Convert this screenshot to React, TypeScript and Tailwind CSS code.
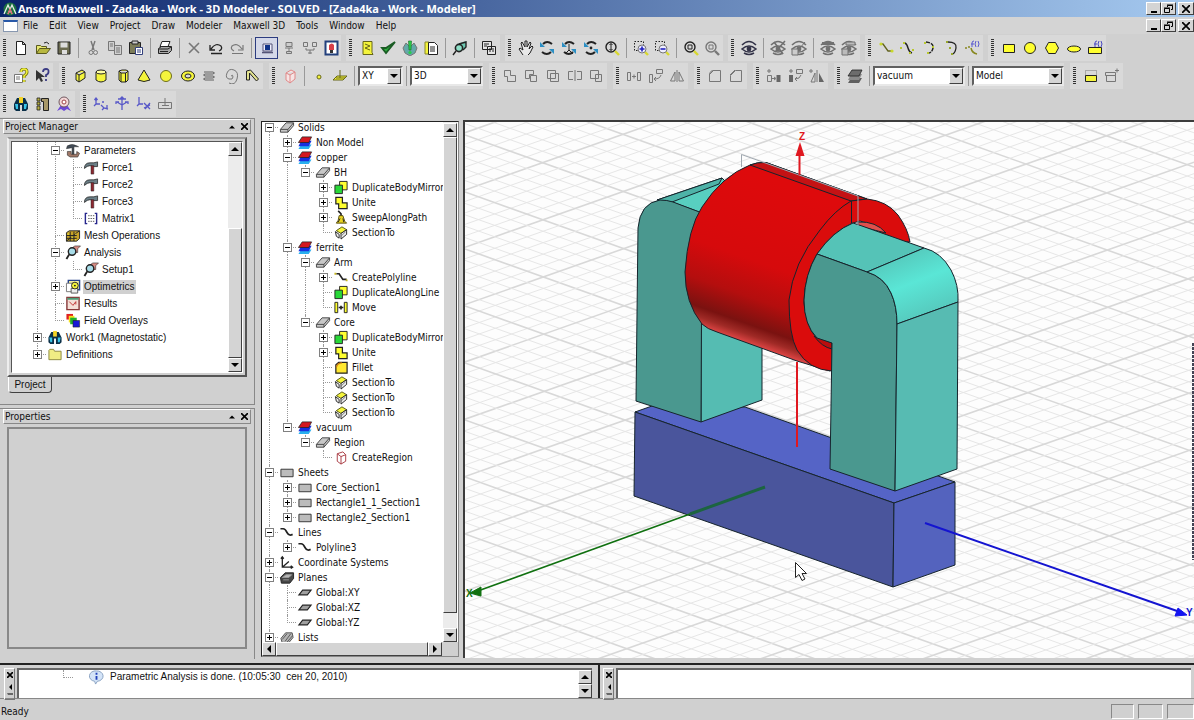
import { Fragment } from "react";
import type { ReactNode } from "react";

const Y = "#f4f43c";
const K = "#222";
const G = "#777";

const raised = "border border-t-white border-l-white border-r-[#404040] border-b-[#404040] bg-[#d4d4d4]";

const eye = (c: string, extra?: ReactNode) => (
  <>
    <path d="M1 5Q8-2 15 5M3 13Q8 16 13 13" stroke={c} strokeWidth="1.6" fill="none" />
    <path d="M1 9Q8 3 15 9Q8 15 1 9Z" stroke={c} strokeWidth="1.6" fill="none" />
    <circle cx="8" cy="9" r="2.4" fill={c} />
    {extra}
  </>
);

const rotate = (extra?: ReactNode) => (
  <>
    <path d="M4 4Q8 0 13 4M3 12Q8 16 12 12" stroke={K} strokeWidth="2" fill="none" />
    <path d="M1 2v5h5zM15 14V9h-5z" fill="#2b8fc4" />
    {extra}
  </>
);

const lens = (c: string, handle: string, extra?: ReactNode) => (
  <>
    <circle cx="7" cy="7" r="5" stroke={c} strokeWidth="1.4" fill="none" />
    <path d="M11 11l4 4" stroke={handle} strokeWidth="2.4" />
    {extra}
  </>
);

const motor = (
  <>
    <path d="M1 8L4 2h8l3 6v5l-2 2H9V9H7v6H3l-2-2z" fill="#0b2f48" />
    <path d="M2 8h3v5H3zM11 8h3l-1 5h-2z" fill="#39c4e8" />
    <path d="M6 1h4v6H6z" fill="#f6d428" />
  </>
);

const layers = (a: string, b: string, c: string) => (
  <>
    <path d="M4 10h11l-3 5H1z" fill={c} />
    <path d="M4 6h11l-3 6H1z" fill={b} />
    <path d="M5 2h10l-3 6H1z" fill={a} stroke={K} strokeWidth=".8" />
  </>
);

const bar = (fill: string, stroke: string) => (
  <>
    <path d="M1 10L7 3h8v3l-6 7H1z" fill={fill} stroke={stroke} />
    <path d="M1 10h8l6-7M9 10v3" fill="none" stroke={stroke} />
  </>
);

const analysis = (
  <>
    <path d="M7 3l3-2h6l-3 3v4H8z" fill="#d88c84" stroke={K} strokeWidth=".6" />
    <circle cx="7" cy="7" r="4" fill="#a8dce8" stroke={K} strokeWidth="1.5" />
    <path d="M4 10l-3 5" stroke={K} strokeWidth="2" />
  </>
);

const icons: Record<string, ReactNode> = {
  new: <path d="M3.500 1.500h6l3 3v10h-9zM9.500 1.500v3h3" fill="#fff" stroke={K} />,
  open: (
    <>
      <path d="M1.500 13.500v-8h4l1 1h5v2" fill="#e8e870" stroke="#5a5a20" />
      <path d="M1.500 13.500l3-5h11l-4 5z" fill="#b8b840" stroke="#5a5a20" />
      <path d="M9 3q3-2 5 1" fill="none" stroke={K} />
    </>
  ),
  save: (
    <>
      <path d="M2 2h12v12H2z" fill="#6b6b50" stroke={K} />
      <path d="M4.500 2.500h7v5h-7zM6 10h5v4H6z" fill="#ddd" />
    </>
  ),
  cut: (
    <>
      <path d="M6 1l3 9M10 1L7 10" stroke={G} strokeWidth="1.400" />
      <circle cx="6" cy="12.500" r="2" fill="none" stroke={G} />
      <circle cx="10.500" cy="12.500" r="2" fill="none" stroke={G} />
    </>
  ),
  copy: <path d="M1.500 1.500h6v9h-6zM7.500 5.500h7v9h-7zM3 4h3M3 6h3M9 8h4M9 10h4M9 12h4" fill="#d0d0d0" stroke={G} />,
  paste: (
    <>
      <path d="M1.500 2.500h11v11h-11z" fill="#7c7c58" stroke={K} />
      <path d="M4 1h6v3H4z" fill="#ccc" stroke={K} />
      <path d="M7.500 7.500h7v7h-7zM9 10h4M9 12h4" fill="#fff" stroke="#33407c" />
    </>
  ),
  print: (
    <>
      <path d="M5 1.500h8l-2 5H3z" fill="#fff" stroke={K} />
      <path d="M1.500 8.500l3-2h10v4l-3 3h-10z" fill="#a8a8a8" stroke={K} />
      <path d="M3 11.500h8M2 9h9l3-2" stroke={K} />
    </>
  ),
  del: <path d="M3 3l10 10M13 3L3 13" stroke={G} strokeWidth="1.600" />,
  undo: <path d="M2 5v5h5M3 9Q8 2 13 6Q15 9 11 11M3 13.500h11" stroke={K} strokeWidth="1.300" fill="none" />,
  redo: <path d="M14 5v5H9M13 9Q8 2 3 6Q1 9 5 11M3 13.500h11" stroke={G} strokeWidth="1.200" fill="none" />,
  local: (
    <>
      <path d="M4 4h9v7H4z" fill="#eef" stroke="#557" />
      <path d="M6 5h5v5H6z" fill="#113388" />
      <path d="M3 12.500h11" stroke="#557" strokeWidth="1.600" />
    </>
  ),
  remote: <path d="M5 2.500h6v4H5zM4 8h8M8 8v3M5.500 11.500h5v2h-5z" fill="#ccc" stroke={G} />,
  queue: <path d="M1.500 2.500h4v4h-4zM10.500 2.500h4v4h-4zM4 8v2h8V8M8 10v4M6 13h4" fill="none" stroke={G} />,
  stop: (
    <>
      <path d="M2.500 1.500h12v13h-12z" fill="#fff" stroke="#23407c" strokeWidth="2" />
      <path d="M6 5q3-3 5 0v5H6z" fill="#d84048" />
      <path d="M7 10h3v3H7z" fill="#333" />
    </>
  ),
  note: (
    <>
      <path d="M4 1.500h9v11l1 2H4z" fill={Y} stroke="#66661a" />
      <path d="M6 4l5 2-5 2 5 2" stroke="#66661a" fill="none" />
    </>
  ),
  check: <path d="M2 8l4 5L15 2l-9 6z" fill="#2cae3c" stroke="#1a5c24" strokeWidth="1.800" />,
  analyze: (
    <>
      <path d="M4 3L1 8l2 5 5 3 5-3 2-5-3-5-4 4z" fill="#64a8a8" stroke={G} />
      <path d="M6.500 1h3l-.5 9H7z" fill="#28d048" stroke="#186828" strokeWidth=".6" />
      <circle cx="8" cy="12.500" r="1.600" fill="#28d048" />
    </>
  ),
  pages: (
    <>
      <path d="M2 2h4v12H2z" fill={Y} stroke="#88882a" />
      <path d="M5.500 2.500h6l3 3v9h-9zM7 7h5M7 9h5M7 11h5" fill="#fff" stroke={K} />
    </>
  ),
  solve: (
    <>
      <path d="M5 4l9-3v7l-6 4z" fill="#6cc8b0" />
      <circle cx="7" cy="8" r="3.600" fill="#8fe0c8" stroke={K} strokeWidth="1.600" />
      <path d="M4 11l-3 4M7 4l7-2v5l-3 3" stroke={K} strokeWidth="1.400" fill="none" />
    </>
  ),
  windows: <path d="M1.500 1.500h9v8h-9zM6.500 6.500h8v8h-8zM3 4h5M3 6h3M8 9h5M8 11h2M11 11h2" fill="#e4e4e4" stroke={K} />,
  hand: <path d="M5 15L1 9l1-1 3 2L3 3l1-1 3 5V1h2v6l3-5 1 1-2 6 3-3 1 1-3 6-2 2" fill="#e8e8e8" stroke={K} />,
  rot1: rotate(),
  rot2: rotate(<path d="M8 4v6M8 10l-4 4M8 10l4 4" stroke={K} />),
  rot3: rotate(<circle cx="8" cy="8" r="1.400" fill={K} />),
  zoomv: lens(K, "#d8d830", <path d="M7 3.500v7M5.500 5L7 3.500 8.500 5M5.500 9L7 10.500 8.500 9" stroke={K} fill="none" />),
  zoomin: (
    <>
      <path d="M1.500 1.500h9v9h-9z" fill="none" stroke={K} strokeDasharray="1.500 1.500" />
      <path d="M12 12l3 3" stroke="#d8d830" strokeWidth="2.400" />
      <circle cx="9" cy="9" r="4" fill="#eef" stroke={G} />
      <path d="M9 6.500v5M6.500 9h5" stroke="#2020c0" strokeWidth="1.600" />
    </>
  ),
  zoomout: (
    <>
      <path d="M1.500 1.500h9v9h-9z" fill="none" stroke={K} strokeDasharray="1.500 1.500" />
      <path d="M12 12l3 3" stroke="#d8d830" strokeWidth="2.400" />
      <circle cx="9" cy="9" r="4" fill="#eef" stroke={G} />
      <path d="M6.500 9h5" stroke="#2020c0" strokeWidth="1.600" />
    </>
  ),
  fit: lens(K, "#d8d830", <path d="M5 5h4v4H5z" fill="none" stroke={K} />),
  fitsel: lens(G, G, <path d="M5 5h4v4H5z" fill="none" stroke={G} />),
  eye: eye("#333348"),
  eyex: eye("#707070", <path d="M4 2l9 12M15 1L5 12" stroke="#707070" strokeWidth="1.600" />),
  eyebox: eye("#707070", <path d="M1 9h6v6H1zM9 8l5-6" fill="#ccc" stroke="#707070" />),
  eyeall: eye("#707070", <path d="M2 2h12v3H2z" fill="#707070" />),
  eyebox2: eye("#707070", <path d="M1 9h6v6H1zM5 2h9v3H5z" fill="#bbb" stroke="#707070" />),
  line: (
    <>
      <path d="M3 4h2l5 7h4" fill="none" stroke="#62621e" strokeWidth="1.300" />
      <circle cx="3" cy="4" r="1.600" fill="#c8d82c" />
      <circle cx="14" cy="11" r="1.600" fill="#c8d82c" />
    </>
  ),
  spline: (
    <>
      <path d="M6 3q2 1 3 5t4 5" fill="none" stroke={K} strokeWidth="1.400" />
      <path d="M1 7h2v2H1zM4 2h2v2H4zM10 12h2v2h-2zM13 9h2v2h-2z" fill="#b8c82c" />
    </>
  ),
  arc3: (
    <>
      <path d="M5 2q8 1 7 6t-5 5" fill="none" stroke={K} strokeWidth="1.400" strokeDasharray="4 1" />
      <path d="M3 2h2v2H3zM11 6h2v2h-2zM6 12h2v2H6z" fill="#b8c82c" />
    </>
  ),
  arcc: (
    <>
      <path d="M5 2q9 0 8 6t-4 6" fill="none" stroke={K} strokeWidth="1.300" />
      <path d="M3 1h2v2H3zM6 7h2v2H6zM8 13h2v2H8z" fill="#98a82c" />
    </>
  ),
  eqc: (
    <>
      <path d="M1 8h2M4 7h2M7 8q1 5 6 6" stroke="#888820" fill="none" strokeWidth="1.500" />
      <path d="M8 7V3q0-2 2-2M7 4h3M12 1q-2 3 0 6M14 1q2 3 0 6" stroke="#5858d0" fill="none" />
    </>
  ),
  rect: <path d="M2.500 4.500h11v8h-11z" fill="#ffff30" stroke={K} />,
  circle: <circle cx="8" cy="8" r="5.500" fill="#ffff30" stroke={K} />,
  hexagon: <path d="M4.500 2.500h7l3 5.500-3 5.500h-7L1.500 8z" fill="#ffff30" stroke={K} />,
  ellipse: <ellipse cx="8" cy="9" rx="6.500" ry="3" fill="#ffff30" stroke={K} />,
  eqs: (
    <>
      <path d="M1.500 7.500h13v6h-13z" fill="#ffff30" stroke={K} />
      <path d="M8 7V3q0-2 2-2M7 4h3M12 1q-2 3 0 6M14 1q2 3 0 6" stroke="#4848c0" fill="none" />
    </>
  ),
  help: (
    <>
      <path d="M1.500 6.500h8v8h-8z" fill="#fff" stroke={G} />
      <path d="M3 9h4M3 11h4" stroke={G} />
      <path d="M8 4q0-3 3-3t3 3q0 2-3 4v2M11 12v2" fill="none" stroke="#77770e" strokeWidth="3" />
      <path d="M8 4q0-3 3-3t3 3q0 2-3 4v2M11 12v2" fill="none" stroke={Y} strokeWidth="1.500" />
    </>
  ),
  whats: (
    <>
      <path d="M2 2v11l3-3 2 4 2-1-2-4h4z" fill="#333" />
      <path d="M9 4q0-3 3-3t2.500 3q0 2-2.500 3v2M12 11v2" fill="none" stroke="#3c3c84" strokeWidth="1.800" />
    </>
  ),
  box: <path d="M4 5l6-3 3 2v6l-6 4-3-2zM4 5l3 2 6-3M7 7v7" fill={Y} stroke={K} />,
  cylinder: (
    <>
      <path d="M3 4v8q5 4 10 0V4" fill={Y} stroke={K} />
      <ellipse cx="8" cy="4" rx="5" ry="2" fill="#ffffa0" stroke={K} />
    </>
  ),
  prism: <path d="M4 3l3-1h4l2 1v9l-2 2H6l-2-2zM4 3l2 2h5l2-2M6 5v9M10.500 5v9" fill={Y} stroke={K} />,
  cone: <path d="M8 2l6 10q-6 3-12 0z" fill={Y} stroke={K} />,
  sphere: <circle cx="8" cy="8" r="5.500" fill={Y} stroke="#6c6c20" />,
  torus: (
    <>
      <ellipse cx="8" cy="8" rx="6.500" ry="5" fill={Y} stroke={K} />
      <ellipse cx="8" cy="8" rx="3" ry="2" fill="#d9d9d9" stroke={K} />
    </>
  ),
  helix: <path d="M3 4h9q3 1 0 2H4q-3 1 0 2h8q3 1 0 2H4q-3 1 0 2h9" fill="none" stroke="#606060" />,
  spiral: <path d="M8 8q2-2 2 1t-4 2-2-6 7-3 3 9-8 4" fill="none" stroke={G} />,
  bond: <path d="M2.500 12V3l4-1 8 9-2 2-7-8v7z" fill="#e4e490" stroke={K} />,
  region: <path d="M4 5l5-3 4 2v7l-5 4-4-3zM4 5l4 2 5-3M8 7v8" fill="#f6e4e4" stroke="#e08888" />,
  point: <circle cx="8" cy="9" r="2" fill={Y} stroke="#66661a" />,
  plane: <path d="M5 8h10l-4 4H1zM8 2v8M4 10h9" fill={Y} stroke="#66661a" />,
  unite: <path d="M2.500 2.500h6v5h5v6h-8v-5h-3z" fill="none" stroke={G} />,
  subtract: <path d="M2.500 2.500h8v4h-4v4h-4zM7.500 7.500h6v6h-6z" fill="none" stroke={G} />,
  intersect: <path d="M2.500 2.500h8v8h-8zM5.500 5.500h8v8h-8z" fill="none" stroke={G} />,
  split: <path d="M6 3.500H1.500v8H6M10 3.500h4.500v8H10M8 2v11" fill="none" stroke={G} />,
  imprint: <path d="M2.500 2.500h8v8h-8zM7.500 6.500h6v7h-6z" fill="none" stroke={G} />,
  move: <path d="M1.500 4.500h3v8h-3zM11.500 4.500h3v8h-3zM6 8.500h4M8 6.500v4" fill="none" stroke={G} />,
  rotobj: <path d="M1.500 6.500h3v8h-3zM8.500 1.500h6v4h-6zM6 11q6 0 7-4M8 9l-2 2 2 2" fill="none" stroke={G} />,
  mirror: <path d="M6 4v9H1.500zM10 4v9h4.500zM8 2v12" fill="none" stroke={G} />,
  fillet: <path d="M2.500 13.500v-8q1-3 4-3h7v11zM2 7l5-5" fill="none" stroke={G} />,
  chamfer: <path d="M2.500 13.500v-6l5-5h6v11zM2 7l5-5" fill="none" stroke={G} />,
  dupline: (
    <>
      <path d="M1 3h4M3 1v4M1.500 7.500h4v6h-4zM6 10.500h3M8 9l2 1.500L8 12" stroke={G} />
      <path d="M10.500 7h4v7h-4z" fill="#666" />
    </>
  ),
  duprot: (
    <>
      <path d="M1 3h4M3 1v4M8.500 1.500h6v4h-6zM7 11q5 0 6-4M9 9l-2 2 2 2" stroke={G} />
      <path d="M1 7h4v7H1z" fill="#666" />
    </>
  ),
  dupmirror: (
    <>
      <path d="M0 3h4M2 1v4M6 5v9H2zM8 2v12" stroke={G} />
      <path d="M10 5v9h5z" fill="#666" />
    </>
  ),
  layer: layers("#6c6c6c", "#8a8a8a", "#606060"),
  cover: (
    <>
      <path d="M2.500 2.500h11v5h-11z" fill="none" stroke="#777" strokeDasharray="1 1" />
      <path d="M2.500 7.500h11v6h-11z" fill={Y} stroke={K} />
    </>
  ),
  uncover: <path d="M1.500 4.500h10v3h-10zM2.500 7.500h9v6h-9zM11 2.500h4M13 .5v4" fill="none" stroke={G} />,
  motor,
  mat: (
    <>
      <path d="M2 2h3v3H2zM2 6h3v3H2zM2 10h3v4H2z" fill="#b8b040" stroke={K} strokeWidth=".8" />
      <path d="M6.500 2.500h7v12h-5v-9h-2z" fill="#a89868" stroke={K} />
    </>
  ),
  medal: (
    <>
      <path d="M1 15l4-6h6l4 6-4-2-3 2-3-2z" fill="#6c48d8" />
      <circle cx="8" cy="6" r="5" fill="#f4d8d8" stroke="#705860" />
      <circle cx="8" cy="6" r="2" fill="#fff" stroke="#a04048" />
    </>
  ),
  cs1: <path d="M3 2v6h4M3 8l-2 2M1.500 4L3 2l1.500 2M8 9l3 3 4 1M11 12l-2 2M14 9v4M9 6h2" fill="none" stroke="#5858c8" strokeWidth="1.300" />,
  cs2: <path d="M8 1v13M8 9l5-3M8 9L3 6M4 3h8M6 3l2-2 2 2M11 6h3v2M5 6H2v2" fill="none" stroke="#5858c8" strokeWidth="1.300" />,
  cs3: <path d="M3 1v7h4M3 8l-2 2M8 12l6-3M8 7l6 6M9 13l5-6" fill="none" stroke="#5858c8" strokeWidth="1.300" />,
  cs4: <path d="M1.500 6.500h13v6h-13zM8 2v8M5 9.500h7" fill="none" stroke={G} />,

  params: (
    <>
      <path d="M2 3q5-3 10 0l2 1H9v10H7V5L1 6z" fill="#434d58" stroke={K} strokeWidth=".5" />
      <path d="M2 9h4v3h6V9l3 2-2 4H5l-3-2z" fill="#a07868" stroke={K} strokeWidth=".6" />
    </>
  ),
  force: (
    <>
      <path d="M1 9q0-6 6-6h4l4-1v5h-5l-3-1q-3 0-6 3z" fill="#6c8088" stroke={K} strokeWidth=".8" />
      <path d="M8 6h3v9H8z" fill="#8c2830" stroke={K} strokeWidth=".5" />
    </>
  ),
  matrix: (
    <>
      <path d="M4 2.500H2v11h2M12 2.500h2v11h-2" fill="none" stroke="#26268c" strokeWidth="1.500" />
      <path d="M5 5h1.500M7.500 5H9M10 5h1.500M5 8h1.500M7.500 8H9M10 8h1.500M5 11h1.500M7.500 11H9M10 11h1.500" stroke="#555" />
    </>
  ),
  mesh: (
    <>
      <path d="M1 5l3-2h11v8l-3 3H1z" fill="#c8a428" stroke={K} />
      <path d="M1 8h11M1 11h11M5 4v10M9 4v10M1 14l11-9M12 5l3-2" stroke={K} />
      <path d="M2 6h2v1H2zM6 9h2v1H6zM10 6h1v1h-1zM10 12h1v1h-1z" fill={Y} />
    </>
  ),
  analysis,
  opti: (
    <>
      <path d="M3 1.500h12v10H3z" fill="#f4f0a0" stroke="#24408c" strokeWidth="1.500" />
      <path d="M1 4.500h7v9H1z" fill="#fff" stroke={G} />
      <path d="M6 10h7v5H6z" fill="#eee" stroke="#555" />
      <circle cx="10" cy="7" r="3.600" fill={Y} stroke={K} />
      <circle cx="10" cy="7" r="1" fill={K} />
    </>
  ),
  results: (
    <>
      <path d="M1.500 1.500h13v13h-13z" fill="#f4e0d8" stroke="#883838" strokeWidth="1.500" />
      <path d="M2 2h12v2H2z" fill="#4c9c78" />
      <path d="M4 6l4 4 3-4M11 6v3" stroke="#c03030" fill="none" />
    </>
  ),
  overlays: (
    <>
      <path d="M1 1h7v6H1z" fill="#e02020" />
      <path d="M3.500 3h6v7h-6z" fill="#f4e020" />
      <path d="M5 5h7v7H5z" fill="#20b030" />
      <path d="M8 8h7v7H8z" fill="#1818d8" stroke={K} strokeWidth=".6" />
    </>
  ),
  folder: <path d="M1.500 13.500v-10l1-1h4l1 2h7v9z" fill="#f0ec84" stroke="#8c8840" />,
  solid: bar("#c8c8c8", "#444"),
  mater: layers("#d41820", "#1830e0", "#28b0f0"),
  dup: (
    <>
      <path d="M6.500 1.500h8v9h-8z" fill="#ffff30" stroke={K} />
      <path d="M1.500 5.500h8v9h-8z" fill="#28d838" stroke={K} />
    </>
  ),
  unitey: <path d="M2.500 2.500h7v6h5v6h-9v-5h-3z" fill="#ffff30" stroke={K} strokeWidth="1.300" />,
  sweep: (
    <>
      <path d="M5 1l3 3v6" stroke={K} strokeWidth="1.800" fill="none" />
      <path d="M6 6h4l2 6 2 2H3l2-3z" fill="#e8d420" stroke="#554c10" />
      <path d="M7 9l-2 4M10 9l1 4" stroke={K} />
    </>
  ),
  section: (
    <>
      <path d="M3 6l6-4 5 3-6 4z" fill={Y} stroke="#555510" />
      <path d="M2 7l4 3v4l-3-2zM8 9l6-4v5l-6 5z" fill="#eee" stroke={K} />
      <path d="M8 12l5-5" stroke={G} />
    </>
  ),
  poly: (
    <>
      <path d="M3 4h3l4 6h4" stroke={K} strokeWidth="1.800" fill="none" />
      <path d="M1 3h2v2H1zM13 10h2v2h-2z" fill="#c8b820" />
    </>
  ),
  movey: (
    <>
      <path d="M1.500 2.500h3v11h-3zM11.500 2.500h3v11h-3z" fill="#ffff30" stroke={K} />
      <path d="M5.500 8h5M8 6v4" stroke={K} strokeWidth="1.800" />
    </>
  ),
  fillety: (
    <>
      <path d="M2.500 14v-9l3-2.500h9V14z" fill="#ffe830" stroke={K} strokeWidth="1.300" />
      <path d="M3 8q1-5 6-5" fill="none" stroke="#c87818" strokeWidth="1.300" />
    </>
  ),
  regiony: <path d="M4 4l6-2 3 3v7l-5 3-4-3zM4 4l4 3 5-2M8 7v8" fill="#fff" stroke="#a83840" />,
  sheet: <path d="M1.500 4.500h13v8h-13z" fill="#bcbcbc" stroke="#333" />,
  curve: <path d="M1 4h3q2 0 4 4t6 2" stroke={K} strokeWidth="1.800" fill="none" />,
  coord: <path d="M3 2v11h11M3 13l7-6M1.500 4L3 2l1.500 2M12 11.500l2 1.500-2 1.500" stroke={K} strokeWidth="1.400" fill="none" />,
  planes: (
    <>
      <path d="M1 8l5-5h9v6l-4 5H2z" fill="#484848" stroke={K} />
      <path d="M3 8l4-3h6l-3 3zM4 10.500h6" fill="#b8b8b8" stroke="#999" />
    </>
  ),
  planei: <path d="M5.500 5.500h9l-4 5h-9z" fill="#a0a0a0" stroke={K} strokeWidth="1.200" />,
  lists: <path d="M1.500 9l5-6h7l1 5-5 6H3zM3 10l5-6M6 12l6-8M8 13l6-7" fill="#b4b4b4" stroke="#555" />,
  info: (
    <>
      <path d="M8 1a6.500 5.500 0 0 1 1 11l-2 3-1-3A6.500 5.500 0 0 1 8 1z" fill="#d4e4f8" stroke="#88a0c0" />
      <path d="M8 3v2M8 6.500v4" stroke="#2040b8" strokeWidth="2" />
    </>
  ),
};

const Icon = ({ name, className = "h-4 w-4" }: { name: string; className?: string }) => (
  <svg viewBox="0 0 16 16" className={`shrink-0 ${className}`} fill="none">
    {icons[name]}
  </svg>
);

type ArrowDir = "up" | "down" | "left" | "right";

const arrows: Record<ArrowDir, string> = {
  up: "M0 6L4 2l4 4z",
  down: "M0 2l4 4 4-4z",
  left: "M6 0L2 4l4 4z",
  right: "M2 0l4 4-4 4z",
};

const Arrow = ({ dir, className = "h-2 w-2" }: { dir: ArrowDir; className?: string }) => (
  <svg viewBox="0 0 8 8" className={className}>
    <path d={arrows[dir]} fill="#000" />
  </svg>
);

const ScrollButton = ({ dir }: { dir: ArrowDir }) => (
  <button aria-label={`Scroll ${dir}`} className={`flex h-[14px] w-[14px] shrink-0 items-center justify-center ${raised}`}>
    <Arrow dir={dir} />
  </button>
);

/* ---------- toolbars ---------- */

const segWidths: Record<number, string> = {
  1: "w-[22px]",
  2: "w-[43px]",
  3: "w-[65px]",
  4: "w-[86px]",
  5: "w-[108px]",
  9: "w-[194px]",
};

type Combo = { label: string; options: string[]; width: string };
type Segment = string[] | Combo;

const row1: Segment[][] = [
  [["new", "open", "save"], ["cut", "copy", "paste"], ["print"], ["del", "undo", "redo"], ["local", "remote", "queue", "stop"]],
  [["note", "check", "analyze", "pages"], ["solve"], ["windows"]],
  [["hand", "rot1", "rot2", "rot3", "zoomv"], ["zoomin", "zoomout"], ["fit", "fitsel"]],
  [["eye"], ["eyex", "eyebox"], ["eyeall", "eyebox2"]],
  [["line", "spline", "arc3", "arcc", "eqc"]],
  [["rect", "circle", "hexagon", "ellipse", "eqs"]],
];

const row2: Segment[][] = [
  [["help", "whats"]],
  [["box", "cylinder", "prism", "cone", "sphere", "torus", "helix", "spiral", "bond"]],
  [
    ["region"],
    ["point", "plane"],
    { label: "Drawing plane", options: ["XY", "YZ", "XZ"], width: "w-[45px]" },
    { label: "Movement mode", options: ["3D", "In Plane"], width: "w-[73px]" },
  ],
  [["unite", "subtract", "intersect", "split", "imprint"]],
  [["move", "rotobj", "mirror"]],
  [["fillet", "chamfer"]],
  [["dupline", "duprot", "dupmirror"]],
  [
    ["layer"],
    { label: "Material", options: ["vacuum", "copper", "ferrite"], width: "w-[92px]" },
    { label: "Model type", options: ["Model", "Non Model"], width: "w-[92px]" },
  ],
  [["cover", "uncover"]],
];

const row3: Segment[][] = [[["motor", "mat", "medal"]], [["cs1", "cs2", "cs3", "cs4"]]];

const ComboBox = ({ combo }: { combo: Combo }) => (
  <div className={`relative h-[20px] border-2 border-t-[#606060] border-l-[#606060] border-r-[#e8e8e8] border-b-[#e8e8e8] bg-white ${combo.width}`}>
    <select aria-label={combo.label} className="h-full w-full appearance-none pl-[2px] leading-4 outline-none">
      {combo.options.map((o) => (
        <option key={o}>{o}</option>
      ))}
    </select>
    <span className={`pointer-events-none absolute top-0 right-0 flex h-4 w-[14px] items-center justify-center ${raised}`}>
      <Arrow dir="down" />
    </span>
  </div>
);

const ToolRow = ({ groups, gap }: { groups: Segment[][]; gap: string }) => (
  <div className={`flex h-7 items-center ${gap}`}>
    {groups.map((group, gi) => (
      <div key={gi} className="flex h-[26px] shrink-0 items-center bg-[#d9d9d9]" role="toolbar">
        <div className="mr-1 ml-[3px] h-[18px] w-[3px] bg-[repeating-linear-gradient(#333_0_1px,#d9d9d9_1px_2px)]" />
        {group.map((seg, si) => (
          <Fragment key={si}>
            {si > 0 && <div className="mx-[3px] h-5 w-px bg-[#999]" />}
            {Array.isArray(seg) ? (
              <div className={`flex ${segWidths[seg.length]}`}>
                {seg.map((name) => (
                  <button
                    key={name}
                    aria-label={name}
                    className={`flex h-[22px] flex-1 items-center justify-center ${name === "local" ? "border border-[#2c3c80] bg-[#d4d8e8]" : ""}`}
                  >
                    <Icon name={name} />
                  </button>
                ))}
              </div>
            ) : (
              <ComboBox combo={seg} />
            )}
          </Fragment>
        ))}
      </div>
    ))}
  </div>
);

/* ---------- trees ---------- */

// depth, expander ("+", "-" or none), icon, label
type Node = [number, string, string, string];

const projectTree: Node[] = [
  [1, "-", "params", "Parameters"],
  [2, "", "force", "Force1"],
  [2, "", "force", "Force2"],
  [2, "", "force", "Force3"],
  [2, "", "matrix", "Matrix1"],
  [1, "", "mesh", "Mesh Operations"],
  [1, "-", "analysis", "Analysis"],
  [2, "", "analysis", "Setup1"],
  [1, "+", "opti", "Optimetrics"],
  [1, "", "results", "Results"],
  [1, "", "overlays", "Field Overlays"],
  [0, "+", "motor", "Work1 (Magnetostatic)"],
  [0, "+", "folder", "Definitions"],
];

const modelTree: Node[] = [
  [0, "-", "solid", "Solids"],
  [1, "+", "mater", "Non Model"],
  [1, "-", "mater", "copper"],
  [2, "-", "solid", "BH"],
  [3, "+", "dup", "DuplicateBodyMirror"],
  [3, "+", "unitey", "Unite"],
  [3, "+", "sweep", "SweepAlongPath"],
  [3, "", "section", "SectionTo"],
  [1, "-", "mater", "ferrite"],
  [2, "-", "solid", "Arm"],
  [3, "+", "poly", "CreatePolyline"],
  [3, "", "dup", "DuplicateAlongLine"],
  [3, "", "movey", "Move"],
  [2, "-", "solid", "Core"],
  [3, "+", "dup", "DuplicateBodyMirror"],
  [3, "+", "unitey", "Unite"],
  [3, "", "fillety", "Fillet"],
  [3, "", "section", "SectionTo"],
  [3, "", "section", "SectionTo"],
  [3, "", "section", "SectionTo"],
  [1, "-", "mater", "vacuum"],
  [2, "-", "solid", "Region"],
  [3, "", "regiony", "CreateRegion"],
  [0, "-", "sheet", "Sheets"],
  [1, "+", "sheet", "Core_Section1"],
  [1, "+", "sheet", "Rectangle1_1_Section1"],
  [1, "+", "sheet", "Rectangle2_Section1"],
  [0, "-", "curve", "Lines"],
  [1, "+", "curve", "Polyline3"],
  [0, "+", "coord", "Coordinate Systems"],
  [0, "-", "planes", "Planes"],
  [1, "", "planei", "Global:XY"],
  [1, "", "planei", "Global:XZ"],
  [1, "", "planei", "Global:YZ"],
  [0, "+", "lists", "Lists"],
];

const continues = (nodes: Node[], index: number, level: number) => {
  for (let j = index + 1; j < nodes.length; j++) {
    if (nodes[j][0] < level) return false;
    if (nodes[j][0] === level) return true;
  }
  return false;
};

type TreeProps = {
  nodes: Node[];
  rowClass: string;
  label: string;
  selected?: string;
};

const Tree = ({ nodes, rowClass, label, selected }: TreeProps) => (
  <ul role="tree" aria-label={label}>
    {nodes.map(([depth, toggle, icon, text], i) => (
      <li key={i} role="treeitem" className={`flex items-center whitespace-nowrap ${rowClass}`}>
        {Array.from({ length: depth }, (_, level) => (
          <span key={level} className="grid h-full w-[18px] shrink-0 grid-cols-2">
            {continues(nodes, i, level) && <span className="col-start-2 border-l border-dotted border-[#999]" />}
          </span>
        ))}
        <span className="grid h-full w-[18px] shrink-0 grid-cols-2 grid-rows-2">
          <span
            className={`col-start-2 row-start-1 border-b border-dotted border-[#999] ${i === 0 && depth === 0 ? "" : "border-l"}`}
          />
          <span className={`col-start-2 row-start-2 border-dotted border-[#999] ${continues(nodes, i, depth) ? "border-l" : ""}`} />
          {toggle && (
            <button
              aria-label={toggle === "+" ? `Expand ${text}` : `Collapse ${text}`}
              className="z-10 col-span-2 col-start-1 row-span-2 row-start-1 flex h-[9px] w-[9px] items-center justify-center self-center justify-self-center border border-[#808080] bg-white"
            >
              <svg viewBox="0 0 5 5" className="h-[5px] w-[5px]">
                <path d={toggle === "+" ? "M0 2h5v1H0zM2 0h1v5H2z" : "M0 2h5v1H0z"} fill="#000" />
              </svg>
            </button>
          )}
        </span>
        <Icon name={icon} className="h-[15px] w-[18px]" />
        <span className={`ml-px px-px ${selected === text ? "bg-[#d0d0d0]" : ""}`}>{text}</span>
      </li>
    ))}
  </ul>
);

/* ---------- docked panels ---------- */

const PanelHeader = ({ title }: { title: string }) => (
  <div className="mx-[3px] flex h-[15px] shrink-0 items-center border border-t-white border-l-white border-r-[#888] border-b-[#888] pl-px">
    <h2 className="flex-1">{title}</h2>
    <button aria-label={`Minimize ${title}`} className="mr-[6px]">
      <Arrow dir="up" className="h-[6px] w-[6px]" />
    </button>
    <button aria-label={`Close ${title}`} className="mr-[2px]">
      <svg viewBox="0 0 7 7" className="h-[7px] w-[7px]">
        <path d="M0 0l7 7M7 0L0 7" stroke="#000" strokeWidth="1.600" />
      </svg>
    </button>
  </div>
);

const DockHandle = ({ name }: { name: string }) => (
  <div className="flex h-8 w-[11px] flex-col items-center justify-between border border-t-white border-l-white border-r-[#777] border-b-[#777] py-[3px]">
    <button aria-label={`Close ${name}`}>
      <svg viewBox="0 0 6 6" className="h-[6px] w-[6px]">
        <path d="M0 0l6 6M6 0L0 6" stroke="#000" strokeWidth="1.600" />
      </svg>
    </button>
    <button aria-label={`Dock ${name}`}>
      <svg viewBox="0 0 8 12" className="h-3 w-2">
        <path d="M6 0L3 3l3 3zM1 9.500h6v1H2z" fill="#000" />
      </svg>
    </button>
  </div>
);

const WindowButtons = () => (
  <div className="flex">
    <button aria-label="Minimize" className={`flex h-[13px] w-[15px] items-end justify-center pb-px ${raised}`}>
      <span className="h-0.5 w-1.5 bg-black" />
    </button>
    <button aria-label="Restore" className={`mr-0.5 flex h-[13px] w-[15px] items-center justify-center ${raised}`}>
      <svg viewBox="0 0 9 9" className="h-[9px] w-[9px]">
        <path d="M3.500 3V1.500h5v4H7M3 1h6M.5 4.500h5v4h-5zM0 4h6" fill="none" stroke="#000" />
      </svg>
    </button>
    <button aria-label="Close" className={`flex h-[13px] w-[16px] items-center justify-center ${raised}`}>
      <svg viewBox="0 0 8 8" className="h-2 w-2">
        <path d="M0 0l8 8M8 0L0 8" stroke="#000" strokeWidth="1.700" />
      </svg>
    </button>
  </div>
);

/* ---------- 3D view ---------- */

const gridLines = Array.from({ length: 110 }, (_, i) => i - 30);

const Scene = () => (
  <svg viewBox="465 122 729 536" preserveAspectRatio="xMidYMid slice" className="h-full w-full" aria-label="3D model view">
    <defs>
      <linearGradient id="coil" gradientUnits="userSpaceOnUse" x1="806" y1="193" x2="752" y2="346">
        <stop offset="0" stopColor="#de0a0c" />
        <stop offset="0.500" stopColor="#d60a0c" />
        <stop offset="0.720" stopColor="#b40e0e" />
        <stop offset="0.880" stopColor="#7a1210" />
        <stop offset="0.940" stopColor="#a02a26" />
        <stop offset="1" stopColor="#e84a4a" />
      </linearGradient>
      <linearGradient id="bend" gradientUnits="userSpaceOnUse" x1="900" y1="255" x2="925" y2="318">
        <stop offset="0" stopColor="#55cabd" />
        <stop offset="0.450" stopColor="#5ae6d6" />
        <stop offset="1" stopColor="#56c8bc" />
      </linearGradient>
    </defs>

    {gridLines.map((n) => (
      <g key={n} stroke={n % 5 === 0 ? "#d8d8d8" : "#e6e6e6"} strokeWidth={n % 5 === 0 ? 1.6 : 1}>
        <path d={`M465 ${190 + n * 11.46}L1194 ${190 + n * 11.46 - 257}`} />
        <path d={`M465 ${135 + n * 11.4}L1194 ${135 + n * 11.4 + 260}`} />
      </g>
    ))}

    <g stroke="#16242c" strokeWidth="1" strokeLinejoin="round">
      {/* base block */}
      <path d="M635 412L652 406L745 407L955 482L894 503Z" fill="#5564c6" />
      <path d="M635 412L894 503L893 587L634 496Z" fill="#4a559c" />
      <path d="M894 503L955 482L955 565L893 587Z" fill="#5463be" />

      {/* left arm */}
      <path d="M657 200L722 178L728 184L702 213L672 202Z" fill="#58cfc0" />
      <path d="M657 200L722 178L719 184L672 202Z" fill="#4eb3a8" />
      <path d="M701 320L762 338V400L701 422Z" fill="#55bcb2" />
      <path d="M636 401L638 228Q640 203 660 200Q667 200 673 202L702 213L701 422Z" fill="#4a988f" />

      {/* coil */}
      <path
        d="M750 165Q757 162 766 162.500L867 199L851 201Q850 360 830 371L797 361L717 332Q707 329 702 324Q685 303 685 272Q688 228 702 207Q722 176 750 165Z"
        fill="url(#coil)"
      />
      <path d="M750 165Q757 162 766 162.500L867 199L851 201Z" fill="#c41214" />
      <path
        d="M851 201L867 199Q887 201 898 215Q908 229 910 242L885 240Q877 224 860 221L853 223Q833 231 817 254Q804 277 804 303Q806 328 817 338L832 343V371Q809 370 797 350Q789 335 789 300Q793 263 820 230Q835 210 851 201Z"
        fill="#da0c0c"
      />
      <path d="M858 222Q876 221 886 233L858 226Z" fill="#e0504c" />
      <path d="M814 336Q822 347 832 349V343Z" fill="#b80e0e" />
      <path d="M851.500 201V223" fill="none" />

      {/* right arm */}
      <path d="M853 223L862 226L924 248L867 272L817 254Q833 231 853 223Z" fill="#55c3b7" />
      <path
        d="M817 254L867 272Q884 277 891 293Q897 306 897 324L895 491L830 469L832 343L817 338Q804 325 804 300Q805 274 817 254Z"
        fill="#4a988f"
      />
      <path d="M867 272L924 248Q941 252 951 270Q959 285 958 302L897 324Q897 306 891 293Q884 277 867 272Z" fill="url(#bend)" />
      <path d="M897 324L958 302L957 469L895 491Z" fill="#57bbb2" />
    </g>

    <path d="M741.500 167V154.500L858 196V226" fill="none" stroke="#a0a8b0" />

    {/* axes */}
    <path d="M799.500 150V175M797 362V447" stroke="#e01820" strokeWidth="2" />
    <path d="M800 142L804.500 156H795.500Z" fill="#e01820" />
    <path d="M690 514L765 487" stroke="#1c6440" strokeWidth="3" />
    <path d="M475 592L690 514" stroke="#107010" strokeWidth="1.600" />
    <path d="M470 593L481 587V596Z" fill="#107010" stroke="#107010" />
    <path d="M925 523L1180 612" stroke="#1414d0" strokeWidth="2" />
    <path d="M1178 608L1187 615L1175 616Z" fill="#1414f0" stroke="#1414f0" />
    <g fontSize="10" fontWeight="bold" fontFamily="Liberation Sans, Arial, sans-serif">
      <text x="799" y="140" fill="#e01820">Z</text>
      <text x="466" y="597" fill="#107010">X</text>
      <text x="1186" y="616" fill="#1414d0">Y</text>
    </g>

    {/* pointer */}
    <path d="M795.500 562.500V577.500L799 574.500L802 580.500L805 579L802 573.500H806.500Z" fill="#fff" stroke="#222" />
    <path d="M1193 343V560" stroke="#445" strokeWidth="2" strokeDasharray="3 1" />
  </svg>
);

const menus = ["File", "Edit", "View", "Project", "Draw", "Modeler", "Maxwell 3D", "Tools", "Window", "Help"];

export default function App() {
  return (
    <div className="flex h-screen flex-col overflow-hidden bg-[#d0d0d0] font-['DejaVu_Sans_Condensed','DejaVu_Sans',sans-serif] text-[10px] leading-[14px] text-[#111]">
      <header className="flex h-[17px] shrink-0 items-center bg-[linear-gradient(90deg,#0a246a,#a6caf0)] pl-[3px]">
        <svg viewBox="0 0 14 14" className="h-[14px] w-[14px]">
          <circle cx="7" cy="7" r="6.500" fill="#1c7040" />
          <path d="M1 12L5 3l4 9M5 12l4-9 4 9" stroke="#e8f0e8" strokeWidth="1.300" fill="none" />
          <path d="M5 12l2-5 2 5" stroke="#e06070" strokeWidth="1.300" fill="none" />
        </svg>
        <h1 className="ml-px flex-1 font-['Noto_Sans',sans-serif] text-[11px] font-bold whitespace-nowrap text-white">
          Ansoft Maxwell - Zada4ka - Work - 3D Modeler - SOLVED - [Zada4ka - Work - Modeler]
        </h1>
        <WindowButtons />
      </header>

      <nav className="flex h-[17px] shrink-0 items-center bg-[#d4d4d4] pl-[3px]">
        <div className="mr-[5px] h-3 w-[15px] border border-[#8898b0] border-t-2 border-t-[#2858a8] bg-white" />
        <div className="flex flex-1 gap-[11px]">
          {menus.map((m) => (
            <button key={m}>{m}</button>
          ))}
        </div>
        <WindowButtons />
      </nav>

      <div className="shrink-0">
        <ToolRow groups={row1} gap="gap-[5px]" />
        <ToolRow groups={row2} gap="gap-[6px]" />
        <ToolRow groups={row3} gap="gap-[5px]" />
      </div>

      <main className="flex min-h-0 flex-1">
        <div className="flex w-[255px] shrink-0 flex-col border-t border-[#888]">
          <section className="flex h-[286px] flex-col border-r border-b border-[#888]">
            <PanelHeader title="Project Manager" />
            <div className="mx-[7px] mt-[3px] flex h-[240px] border-2 border-t-[#999] border-l-[#eee] border-r-[#555] border-b-[#555] p-0.5">
              <div className="flex min-w-0 flex-1 border border-t-[#555] border-l-[#555] border-r-white border-b-white bg-white">
                <div className="min-w-0 flex-1 overflow-hidden pl-4 font-['Liberation_Sans',Arial,sans-serif]">
                  <Tree nodes={projectTree} rowClass="h-[17px]" label="Project" selected="Optimetrics" />
                </div>
                <div className="flex w-[14px] flex-col bg-[#ececec]">
                  <ScrollButton dir="up" />
                  <div className="h-[72px]" />
                  <div className={`flex-1 ${raised}`} />
                  <ScrollButton dir="down" />
                </div>
              </div>
            </div>
            <button className="ml-2 h-4 w-[44px] rounded-b-sm border border-t-0 border-l-white border-r-[#404040] border-b-[#404040] font-['Liberation_Sans',Arial,sans-serif]">
              Project
            </button>
          </section>
          <section className="mt-[3px] flex min-h-0 flex-1 flex-col border-t border-r border-[#888]">
            <PanelHeader title="Properties" />
            <div className="mx-[7px] mt-[3px] mb-[10px] flex-1 border-2 border-[#888]" />
          </section>
        </div>

        <div className="mt-[3px] mb-[2px] ml-[6px] flex w-[198px] shrink-0 flex-col border border-t-[#222] border-l-[#222] border-r-[#888] border-b-[#888] bg-white">
          <div className="flex min-h-0 flex-1">
            <div className="-mt-0.5 -ml-0.5 min-w-0 flex-1">
              <Tree nodes={modelTree} rowClass="h-[15px] leading-[12px]" label="Model" />
            </div>
            <div className="mr-px flex w-[14px] flex-col bg-[#ececec] pt-px">
              <ScrollButton dir="up" />
              <div className={`flex-1 ${raised}`} />
              <div className="h-[15px]" />
              <ScrollButton dir="down" />
            </div>
          </div>
          <div className="flex h-[14px] shrink-0 bg-[#d0d0d0]">
            <ScrollButton dir="left" />
            <div className={`flex-1 ${raised}`} />
            <ScrollButton dir="right" />
            <div className="w-[16px]" />
          </div>
        </div>

        <div className="mt-0.5 mb-px ml-1 min-w-0 flex-1 border-t-2 border-l-2 border-[#3c3c3c] bg-[#fdfdfd]">
          <Scene />
        </div>
      </main>

      <div className="flex h-10 shrink-0 border-b border-[#888] pt-1">
        <section aria-label="Messages" className="flex w-[600px] shrink-0 border-t-2 border-r-2 border-[#222] pt-[3px] pl-1">
          <DockHandle name="messages" />
          <div className="mr-[6px] ml-0.5 flex h-[30px] flex-1 border-t-2 border-l-2 border-[#666] bg-white font-['Liberation_Sans',Arial,sans-serif]">
            <div className="flex h-[14px] flex-1 items-center pl-[44px]">
              <span className="h-2 w-[10px] self-start border-b border-l border-dotted border-[#999]" />
              <Icon name="info" className="ml-4 h-[15px] w-[15px]" />
              <span className="ml-[6px] whitespace-pre">Parametric Analysis is done. (10:05:30  сен 20, 2010)</span>
            </div>
            <div className="flex flex-col">
              <ScrollButton dir="up" />
              <ScrollButton dir="down" />
            </div>
          </div>
        </section>
        <section aria-label="Progress" className="flex flex-1 border-t-2 border-[#222] pt-[3px] pl-[3px]">
          <DockHandle name="progress" />
          <div className="mr-[3px] ml-0.5 h-[30px] flex-1 border-t-2 border-l-2 border-[#666] bg-white" />
        </section>
      </div>

      <footer className="flex h-[21px] shrink-0 items-center gap-1 pt-1 pl-px">
        <span className="flex-1">Ready</span>
        <span className="h-[15px] w-[23px] border border-t-[#888] border-l-[#888] border-r-white border-b-white" />
        <span className="h-[15px] w-[25px] border border-t-[#888] border-l-[#888] border-r-white border-b-white" />
        <span className="h-[15px] w-[27px] border border-t-[#888] border-l-[#888] border-r-white border-b-white" />
      </footer>
    </div>
  );
}
